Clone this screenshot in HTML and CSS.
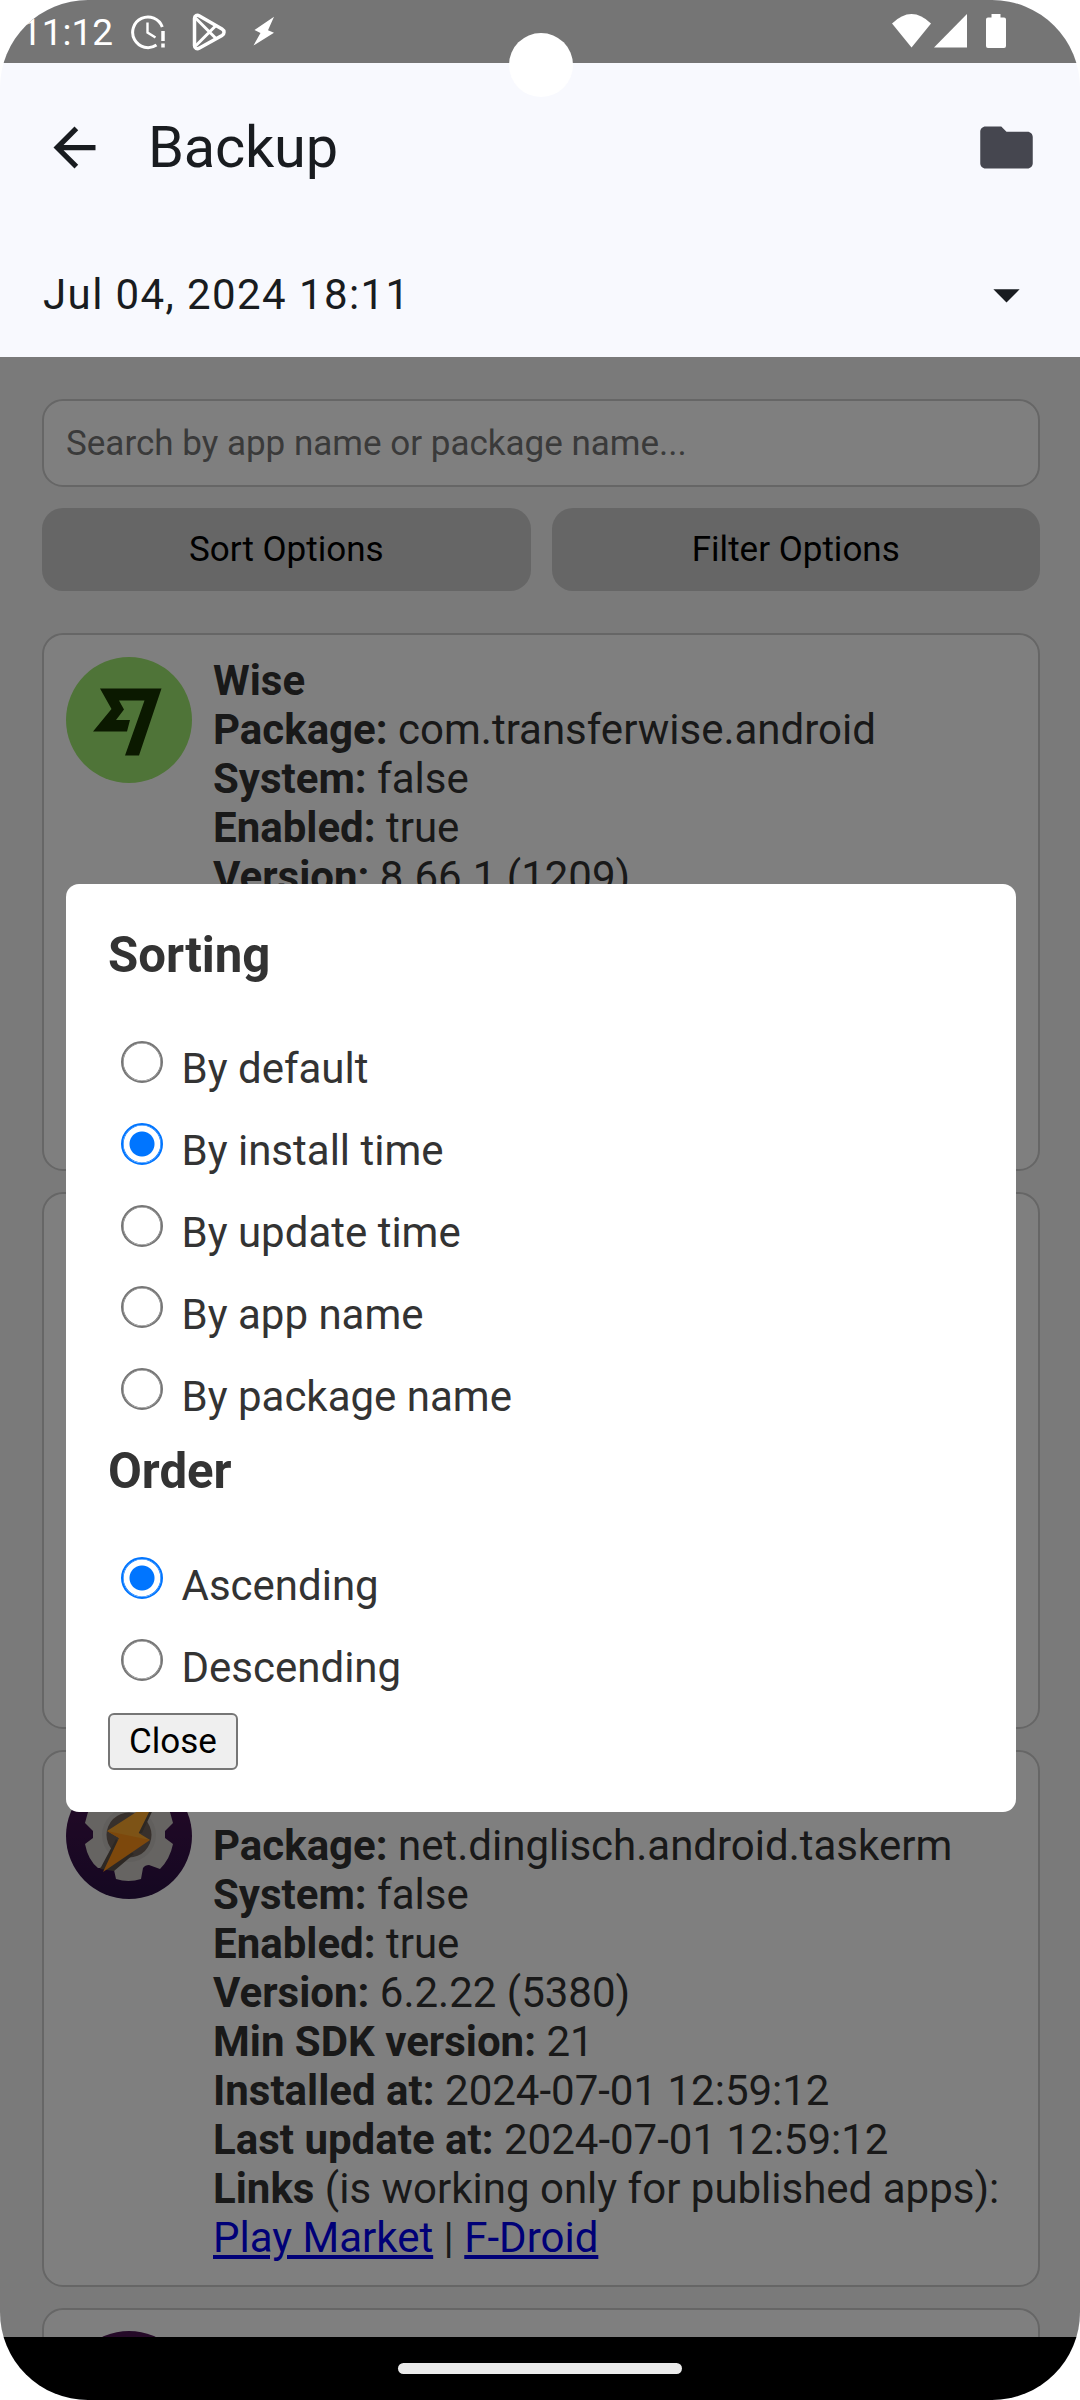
FILE: index.html
```html
<!DOCTYPE html>
<html lang="en">
<head>
<meta charset="utf-8">
<title>Backup</title>
<link rel="stylesheet" href="styles.css">
</head>
<body>
<div class="screen">
  <div class="status-bar">
    <span class="clock">11:12</span>
    <svg class="ic-alarm" viewBox="0 0 36 36" width="36" height="36" fill="none" stroke="#fff" stroke-width="3"><path d="M32.3 13A15.3 15.3 0 1 0 26.500 31"/><path d="M17.500 8.500v10l8 5" stroke-width="2.400"/><path d="M33 17v10M33 29.500v4" stroke-width="3.500"/></svg>
    <svg class="ic-play" viewBox="0 0 36 38" width="36" height="38" fill="none" stroke="#fff" stroke-width="3.500" stroke-linejoin="round"><path d="M3.500 5.500v27c0 3 2.500 4 5 2.500L31 22.500c2.700-1.600 2.700-5 0-6.600L8.500 3C6 1.500 3.500 2.500 3.500 5.500z"/><path d="M4.500 5l21 21M4.500 33l21-21" stroke-width="3"/></svg>
    <svg class="ic-bolt" viewBox="0 0 22 30" width="22" height="30" fill="#fff"><path d="M21 .8 1.500 14l6 3L.5 29.500 21 16.700l-6-2.400z"/></svg>
    <span class="spacer"></span>
    <svg class="ic-wifi" viewBox="0 0 39 34" width="39" height="34" fill="#fff"><path d="M0 9.500Q19.500-9.500 39 9.500L19.500 33.500z"/></svg>
    <svg class="ic-signal" viewBox="0 0 33 34" width="33" height="34" fill="#fff"><path d="M33 0v33.500H0z"/></svg>
    <svg class="ic-battery" viewBox="0 0 20 34" width="20" height="34" fill="#fff"><path d="M5.500 0h9v3.500H18a2 2 0 0 1 2 2V32a2 2 0 0 1-2 2H2a2 2 0 0 1-2-2V5.500a2 2 0 0 1 2-2h3.500z"/></svg>
  </div>

  <header class="app-bar">
    <svg viewBox="0 0 24 24" width="63" height="63" fill="#191c20"><path d="M20 11H7.830l5.590-5.590L12 4l-8 8 8 8 1.410-1.410L7.830 13H20z"/></svg>
    <h1 class="title">Backup</h1>
    <svg viewBox="0 0 24 24" width="63" height="63" fill="#45464f"><path d="M10 4H4c-1.100 0-2 .9-2 2v12c0 1.100.9 2 2 2h16c1.100 0 2-.9 2-2V8c0-1.100-.9-2-2-2h-8z"/></svg>
  </header>
  <div class="backup-select">
    <span>Jul 04, 2024 18:11</span>
    <svg viewBox="0 0 24 24" width="63" height="63" fill="#191c20"><path d="M7 10l5 5 5-5z"/></svg>
  </div>

  <main class="webview">
    <input class="search" type="text" placeholder="Search by app name or package name...">
    <div class="actions">
      <button class="action">Sort Options</button>
      <button class="action">Filter Options</button>
    </div>
    <div class="cards">
      <article class="card">
        <svg class="app-icon" viewBox="0 0 126 126" width="126" height="126"><circle cx="63" cy="63" r="63" fill="#9fe870"/><path fill="#163300" d="M34 31.500H95.500L73 98.500H59L78.500 43.500H53L58 52.500 50 63H64L61 74.500H27L45.500 52z"/></svg>
        <div class="info">
          <div><b>Wise</b></div>
          <div><b>Package:</b> com.transferwise.android</div>
          <div><b>System:</b> false</div>
          <div><b>Enabled:</b> true</div>
          <div><b>Version:</b> 8.66.1 (1209)</div>
        </div>
      </article>
      <article class="card"></article>
      <article class="card">
        <svg class="app-icon" viewBox="0 0 126 126" width="126" height="126">
          <defs><linearGradient id="purple" x1="0" y1="0" x2="0" y2="1"><stop offset="0" stop-color="#4a1450"/><stop offset="1" stop-color="#2a1044"/></linearGradient></defs>
          <circle cx="63" cy="63" r="63" fill="url(#purple)"/>
          <path fill="#ccc8c4" d="M26 30Q21 40 19 50L27 58V65L19 71Q22 87 32 95H34L50 86 48 97 50 106Q56 108 62.500 108T75 106L77 95Q79 92 83 92L94 96Q104 86 107 71L99 65V58L107 50Q105 40 100 30z"/>
          <circle cx="63" cy="62" r="27" fill="#c2beba"/>
          <circle cx="63" cy="62" r="22.500" fill="#6f6158"/>
          <path fill="#5a5048" d="M92 26 76 60 72 60 88 26zM50 66 34 96 48 98 68 81z"/>
          <path fill="#fba62c" d="M89 27 41 58 53 65 84 67 72.700 60z"/>
          <path fill="#fb9018" d="M41 58 53 65 37 99 84 67z"/>
        </svg>
        <div class="info">
          <div><b>Tasker</b></div>
          <div><b>Package:</b> net.dinglisch.android.taskerm</div>
          <div><b>System:</b> false</div>
          <div><b>Enabled:</b> true</div>
          <div><b>Version:</b> 6.2.22 (5380)</div>
          <div><b>Min SDK version:</b> 21</div>
          <div><b>Installed at:</b> 2024-07-01 12:59:12</div>
          <div><b>Last update at:</b> 2024-07-01 12:59:12</div>
          <div><b>Links</b> (is working only for published apps):</div>
          <div><a href="#">Play Market</a> | <a href="#">F-Droid</a></div>
        </div>
      </article>
      <article class="card">
        <svg class="app-icon" viewBox="0 0 126 126" width="126" height="126"><circle cx="63" cy="63" r="63" fill="#4a1450"/></svg>
      </article>
    </div>

    <div class="overlay">
      <div class="modal">
        <h3 class="heading">Sorting</h3>
        <div class="options">
          <label class="option"><input type="radio" name="sort"><span>By default</span></label>
          <label class="option"><input type="radio" name="sort" checked><span>By install time</span></label>
          <label class="option"><input type="radio" name="sort"><span>By update time</span></label>
          <label class="option"><input type="radio" name="sort"><span>By app name</span></label>
          <label class="option"><input type="radio" name="sort"><span>By package name</span></label>
        </div>
        <h3 class="heading">Order</h3>
        <div class="options">
          <label class="option"><input type="radio" name="order" checked><span>Ascending</span></label>
          <label class="option"><input type="radio" name="order"><span>Descending</span></label>
        </div>
        <button class="close">Close</button>
      </div>
    </div>
  </main>

  <footer class="nav-bar"><div class="pill"></div></footer>
  <div class="camera"></div>
</div>
</body>
</html>
```
FILE: styles.css
```css
* { box-sizing: border-box; }

body {
  margin: 0;
  background: #fff;
  font-family: Roboto, sans-serif;
}

.screen {
  position: relative;
  display: flex;
  flex-direction: column;
  width: 1080px;
  height: 2400px;
  border-radius: 88px;
  overflow: hidden;
  background: #f8f9fe;
}

svg { display: block; flex: none; }

.status-bar {
  display: flex;
  height: 63px;
  padding: 0 74px 0 21px;
  background: #757575;
  color: #fff;
}

.clock {
  width: 109px;
  font-size: 37px;
  line-height: 43px;
  padding-top: 11px;
}

.ic-alarm { margin-top: 14px; }
.ic-play { margin: 13px 0 0 25px; }
.ic-bolt { margin: 16px 0 0 26px; }
.spacer { flex: 1; }
.ic-wifi { margin-top: 14px; }
.ic-signal { margin: 14px 0 0 3px; }
.ic-battery { margin: 14px 0 0 19px; }

.app-bar {
  display: flex;
  align-items: center;
  height: 168px;
  padding: 0 42px 0 43px;
}

.title {
  flex: 1;
  margin: 0 0 0 42px;
  font-size: 57.75px;
  font-weight: 400;
  line-height: 68px;
  letter-spacing: -0.2px;
  color: #191c20;
}

.backup-select {
  display: flex;
  align-items: center;
  justify-content: space-between;
  height: 126px;
  padding: 0 42px 0 43px;
  font-size: 42px;
  letter-spacing: 1.4px;
  color: #191c20;
}

.webview {
  position: relative;
  flex: 1;
  min-height: 0;
  overflow: hidden;
  padding: 42px 40px 0 42px;
  background: #f4f4f4;
  color: #333;
}

.search {
  display: block;
  width: 100%;
  height: 88px;
  padding: 0 22px;
  border: 2px solid #ccc;
  border-radius: 21px;
  background: #fff;
  font: 35px Roboto, sans-serif;
}

.search::placeholder { color: #757575; }

.actions {
  display: flex;
  gap: 21px;
  margin: 21px 0 42.4px;
}

.action {
  flex: 1;
  height: 83px;
  padding: 0;
  border: 0;
  border-radius: 21px;
  background: #ccc;
  color: #000;
  font: 35px Roboto, sans-serif;
}

.cards {
  display: flex;
  flex-direction: column;
  gap: 21px;
}

.card {
  display: flex;
  gap: 21px;
  height: 537.3px;
  padding: 21.2px 22px;
  border: 2px solid #ccc;
  border-radius: 21px;
  background: #fff;
}

.info {
  margin-top: -1px;
  font-size: 42px;
  line-height: 49px;
  white-space: nowrap;
}

.info a { color: #0000ee; }

.overlay {
  position: absolute;
  inset: 0;
  display: flex;
  align-items: center;
  justify-content: center;
  background: rgba(0, 0, 0, 0.5);
}

.modal {
  width: 950px;
  height: 928px;
  padding: 42px;
  margin: 2px 0 0 2px;
  border-radius: 13px;
  background: #fff;
}

.heading {
  margin: 0;
  font-size: 49.14px;
  font-weight: 700;
  line-height: 58px;
}

.options {
  padding-top: 44px;
}

.options + .heading { margin-top: 5.5px; }

.option {
  display: flex;
  height: 81.8px;
  padding: 13px 0 0 13px;
  font-size: 42px;
  line-height: 49px;
}

.option input {
  appearance: none;
  width: 42px;
  height: 42px;
  margin: 0 18.5px 0 0;
  border: 2px solid #767676;
  border-radius: 50%;
  background: #fff;
  box-shadow: inset 0 0 0 0.6px #767676;
}

.option input:checked {
  border-color: #0075ff;
  background: radial-gradient(circle, #0075ff 12px, #fff 13px);
  box-shadow: inset 0 0 0 0.6px #0075ff;
}

.option span { padding-top: 3.45px; }

.close {
  display: block;
  width: 130px;
  height: 57px;
  margin-top: 4.5px;
  padding: 0;
  border: 2px solid #767676;
  border-radius: 6px;
  background: #efefef;
  color: #000;
  font: 35px Roboto, sans-serif;
}

.nav-bar {
  display: flex;
  justify-content: center;
  height: 63px;
  padding-top: 26px;
  background: #000;
}

.pill {
  width: 284px;
  height: 11px;
  border-radius: 6px;
  background: #ebebeb;
}

.camera {
  position: absolute;
  left: 509px;
  top: 33px;
  width: 64px;
  height: 64px;
  border-radius: 50%;
  background: #fff;
}
```
